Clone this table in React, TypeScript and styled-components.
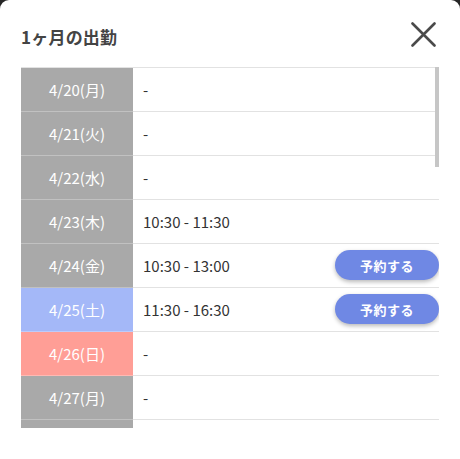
import React from "react";
import styled, { createGlobalStyle } from "styled-components";

const Global = createGlobalStyle`
  html, body { margin: 0; padding: 0; background: #262626; }
  body { font-family: "Noto Sans CJK JP", "Noto Sans", sans-serif; }
  * { box-sizing: border-box; }
`;

const Modal = styled.div`
  width: 460px;
  height: 459px;
  background: #ffffff;
  border-radius: 9px 9px 0 0;
  padding: 0 21px;
  overflow: hidden;
`;

const Header = styled.div`
  height: 67px;
  padding-top: 5px;
  display: flex;
  align-items: center;
  justify-content: space-between;
`;

const Title = styled.h2`
  margin: 0;
  font-size: 17px;
  font-weight: 700;
  color: #444444;
  letter-spacing: 0.2px;
`;

const CloseButton = styled.button`
  width: 26px;
  height: 26px;
  padding: 0;
  margin-right: 3px;
  margin-top: -4px;
  border: none;
  background: transparent;
  display: flex;
  align-items: center;
  justify-content: center;
`;

const TableWrap = styled.div`
  position: relative;
  height: 361px;
  border-top: 1px solid #e2e2e2;
`;

const ScrollArea = styled.div`
  height: 360px;
  overflow-y: auto;
  scrollbar-width: none;
  &::-webkit-scrollbar { display: none; }
`;

const Thumb = styled.div`
  position: absolute;
  right: 0;
  top: -1px;
  width: 4px;
  height: 100px;
  background: #c6c6c6;
`;

const Row = styled.div`
  display: grid;
  grid-template-columns: 112px 1fr;
  height: 44px;
`;

const DateCell = styled.div<{ $kind: "sat" | "sun" | "day" }>`
  background: ${(p) =>
    p.$kind === "sat" ? "#a4b8f8" : p.$kind === "sun" ? "#ff9e96" : "#a9a9a9"};
  color: #ffffff;
  font-size: 15px;
  display: flex;
  align-items: center;
  justify-content: center;
  border-bottom: 1px solid rgba(255, 255, 255, 0.28);
`;

const InfoCell = styled.div`
  display: flex;
  align-items: center;
  justify-content: space-between;
  padding-left: 10px;
  font-size: 15px;
  color: #333333;
  border-bottom: 1px solid #e2e2e2;
`;

const ReserveButton = styled.button`
  width: 104px;
  height: 30px;
  border: none;
  border-radius: 15px;
  background: #6f88e4;
  color: #ffffff;
  font-family: inherit;
  font-size: 13px;
  font-weight: 700;
  letter-spacing: 0.5px;
  box-shadow: 0 2px 4px rgba(0, 0, 0, 0.28);
  margin-bottom: 1px;
`;

const WD = ["日", "月", "火", "水", "木", "金", "土"];

type Day = { label: string; kind: "sat" | "sun" | "day"; time: string; reserve: boolean };

const times: Record<string, [string, boolean]> = {
  "4/23": ["10:30 - 11:30", false],
  "4/24": ["10:30 - 13:00", true],
  "4/25": ["11:30 - 16:30", true],
};

const days: Day[] = Array.from({ length: 30 }, (_, i) => {
  const d = new Date(2020, 3, 20 + i);
  const key = `${d.getMonth() + 1}/${d.getDate()}`;
  const w = d.getDay();
  const t = times[key];
  return {
    label: `${key}(${WD[w]})`,
    kind: w === 6 ? "sat" : w === 0 ? "sun" : "day",
    time: t ? t[0] : "-",
    reserve: t ? t[1] : false,
  };
});

export default function App() {
  return (
    <>
      <Global />
      <Modal>
        <Header>
          <Title>1ヶ月の出勤</Title>
          <CloseButton aria-label="close">
            <svg width="25" height="25" viewBox="0 0 25 25">
              <path d="M1.5 1.5 L23.5 23.5 M23.5 1.5 L1.5 23.5" stroke="#4a4a4a" strokeWidth="2.6" strokeLinecap="round" />
            </svg>
          </CloseButton>
        </Header>
        <TableWrap>
          <ScrollArea>
            {days.map((d) => (
              <Row key={d.label}>
                <DateCell $kind={d.kind}>{d.label}</DateCell>
                <InfoCell>
                  <span>{d.time}</span>
                  {d.reserve && <ReserveButton>予約する</ReserveButton>}
                </InfoCell>
              </Row>
            ))}
          </ScrollArea>
          <Thumb />
        </TableWrap>
      </Modal>
    </>
  );
}
